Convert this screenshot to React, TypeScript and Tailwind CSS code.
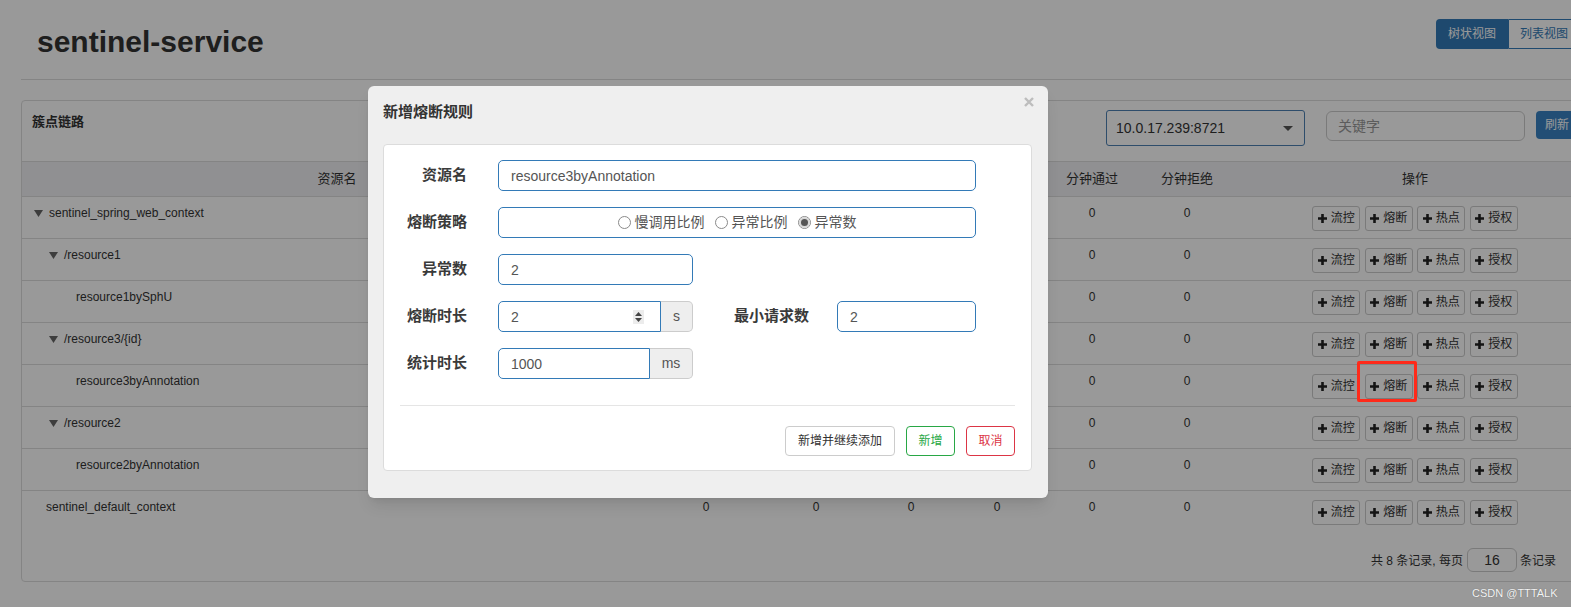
import React from 'react';

interface TreeRow {
  name: string;
  level: number;
  branch: boolean;
}

const ROWS: TreeRow[] = [
  { name: 'sentinel_spring_web_context', level: 0, branch: true },
  { name: '/resource1', level: 1, branch: true },
  { name: 'resource1bySphU', level: 2, branch: false },
  { name: '/resource3/{id}', level: 1, branch: true },
  { name: 'resource3byAnnotation', level: 2, branch: false },
  { name: '/resource2', level: 1, branch: true },
  { name: 'resource2byAnnotation', level: 2, branch: false },
  { name: 'sentinel_default_context', level: 0, branch: false },
];

const INDENT = ['pl-0', 'pl-[15px]', 'pl-[30px]'];
const HEADERS = ['资源名', '通过QPS', '拒绝QPS', '并发数', '平均RT', '分钟通过', '分钟拒绝', '操作'];
const ACTIONS = ['流控', '熔断', '热点', '授权'];
const GRID = 'grid grid-cols-[630px_108px_112px_78px_94px_96px_94px_1fr]';

function Caret() {
  return (
    <svg width="9" height="7" viewBox="0 0 9 7" className="shrink-0">
      <path d="M0 0h9L4.5 7z" fill="#666" />
    </svg>
  );
}

function Plus() {
  return (
    <svg width="9" height="9" viewBox="0 0 9 9" className="shrink-0">
      <path d="M3.2 0h2.6v3.2H9v2.6H5.8V9H3.2V5.8H0V3.2h3.2z" fill="#222" />
    </svg>
  );
}

function Radio({ checked, label }: { checked?: boolean; label: string }) {
  return (
    <span className="inline-flex items-center gap-[4px]">
      <span className="flex h-[13px] w-[13px] items-center justify-center rounded-full border border-[#8a8a8a] bg-white">
        {checked && <span className="h-[7px] w-[7px] rounded-full bg-[#555] ring-2 ring-[#d8d8d8]" />}
      </span>
      <span>{label}</span>
    </span>
  );
}

function Field({ label, children }: { label: string; children: React.ReactNode }) {
  return (
    <div className="mb-[16px] flex h-[31px] items-center">
      <div className="w-[114px] pr-[31px] text-right text-[15px] font-bold text-[#3a3a3a]">{label}</div>
      {children}
    </div>
  );
}

const inputCls = 'h-[31px] rounded-[5px] border border-[#337ab7] bg-white px-[12px] text-[14px] text-[#555] outline-none';

function Modal() {
  return (
    <div className="absolute left-[368px] top-[86px] w-[680px] rounded-[6px] bg-[#efefef] pb-[27px] shadow-lg">
      <div className="h-[58px] pl-[15px] pt-[16px] text-[15px] font-bold leading-[20px] text-[#333]">新增熔断规则</div>
      <svg width="10" height="10" viewBox="0 0 10 10" className="absolute left-[656px] top-[11px]">
        <path d="M1 1l8 8M9 1l-8 8" stroke="#bdbdbd" strokeWidth="2.4" />
      </svg>

      <div className="ml-[15px] w-[649px] rounded-[4px] border border-[#dcdcdc] bg-white pb-[14px] pt-[15px]">
        <Field label="资源名">
          <input readOnly defaultValue="resource3byAnnotation" className={`${inputCls} w-[478px]`} />
        </Field>
        <Field label="熔断策略">
          <div className={`${inputCls} flex w-[478px] items-center justify-center gap-[10px] text-[14px] text-[#444]`}>
            <Radio label="慢调用比例" />
            <Radio label="异常比例" />
            <Radio checked label="异常数" />
          </div>
        </Field>
        <Field label="异常数">
          <input readOnly defaultValue="2" className={`${inputCls} w-[195px]`} />
        </Field>
        <Field label="熔断时长">
          <div className="flex w-[195px]">
            <div className="relative">
              <input readOnly defaultValue="2" className={`${inputCls} w-[163px] rounded-r-none`} />
              <div className="absolute left-[135px] top-[9px] flex h-[14px] w-[11px] flex-col items-center justify-center gap-[2px] bg-[#ececec]">
                <svg width="7" height="4" viewBox="0 0 7 4"><path d="M0 4h7L3.5 0z" fill="#444" /></svg>
                <svg width="7" height="4" viewBox="0 0 7 4"><path d="M0 0h7L3.5 4z" fill="#444" /></svg>
              </div>
            </div>
            <div className="flex h-[31px] flex-1 items-center justify-center rounded-r-[5px] border border-l-0 border-[#ccc] bg-[#eee] text-[14px] text-[#555]">s</div>
          </div>
          <div className="w-[144px] pr-[28px] text-right text-[15px] font-bold text-[#3a3a3a]">最小请求数</div>
          <input readOnly defaultValue="2" className={`${inputCls} w-[139px]`} />
        </Field>
        <Field label="统计时长">
          <div className="flex w-[195px]">
            <input readOnly defaultValue="1000" className={`${inputCls} w-[152px] rounded-r-none`} />
            <div className="flex h-[31px] flex-1 items-center justify-center rounded-r-[5px] border border-l-0 border-[#ccc] bg-[#eee] text-[14px] text-[#555]">ms</div>
          </div>
        </Field>

        <div className="mx-[16px] mt-[26px] border-t border-[#e5e5e5]" />
        <div className="mr-[16px] mt-[20px] flex justify-end gap-[11px] text-[12px]">
          <button className="h-[30px] w-[110px] rounded-[4px] border border-[#ccc] bg-white text-[#333]">新增并继续添加</button>
          <button className="h-[30px] w-[49px] rounded-[4px] border border-[#28a745] bg-white text-[#28a745]">新增</button>
          <button className="h-[30px] w-[49px] rounded-[4px] border border-[#dc3545] bg-white text-[#dc3545]">取消</button>
        </div>
      </div>
    </div>
  );
}

export default function App() {
  return (
    <div className="relative h-[607px] w-[1571px] overflow-hidden bg-white font-['Liberation_Sans','Noto_Sans_CJK_SC',sans-serif] text-[#333]">
      <div className="w-[1618px] px-[21px]">
        {/* page header */}
        <div className="flex h-[80px] items-start justify-between border-b border-[#ddd]">
          <h1 className="mt-[25px] pl-[16px] text-[30px] font-bold leading-[33px] text-[#333]">sentinel-service</h1>
          <div className="mr-[17px] mt-[19px] flex text-[12px]">
            <button className="h-[30px] w-[72px] rounded-l-[4px] bg-[#337ab7] text-white">树状视图</button>
            <button className="h-[30px] w-[72px] rounded-r-[4px] border border-[#337ab7] bg-white text-[#337ab7]">列表视图</button>
          </div>
        </div>

        {/* panel */}
        <div className="mt-[20px] rounded-[4px] border border-[#ddd]">
          <div className="flex h-[60px] items-start pl-[10px] pr-[18px] pt-[9px]">
            <div className="mt-[2px] text-[13px] font-bold leading-[19px]">簇点链路</div>
            <div className="flex-1" />
            <div className="flex h-[36px] w-[199px] items-center justify-between rounded-[3px] border border-[#4d80b3] pl-[9px] pr-[11px] text-[14px]">
              <span>10.0.17.239:8721</span>
              <svg width="10" height="5" viewBox="0 0 10 5"><path d="M0 0h10L5 5z" fill="#555" /></svg>
            </div>
            <input
              readOnly
              placeholder="关键字"
              className="ml-[21px] mt-[1px] h-[30px] w-[199px] rounded-[6px] border border-[#ccc] px-[11px] text-[14px] placeholder:text-[#999] outline-none"
            />
            <button className="ml-[11px] mt-[1px] h-[28px] w-[42px] rounded-[4px] bg-[#3a83c4] text-[12px] text-white">刷新</button>
          </div>

          <div className={`${GRID} h-[36px] items-center border-y border-[#ddd] bg-[#f1f1f3] text-center text-[13px]`}>
            {HEADERS.map((h) => (
              <div key={h}>{h}</div>
            ))}
          </div>

          {ROWS.map((r, i) => (
            <div
              key={r.name}
              className={`${GRID} h-[42px] items-start pt-[8px] text-[12px] leading-[17px] ${i < ROWS.length - 1 ? 'border-b border-[#ddd]' : ''}`}
            >
              <div className="flex items-center pl-[12px]">
                <div className={`flex items-center ${INDENT[r.level]}`}>
                  {r.branch ? (
                    <span className="mr-[6px] flex"><Caret /></span>
                  ) : (
                    <span className="w-[12px]" />
                  )}
                  <span>{r.name}</span>
                </div>
              </div>
              {[0, 1, 2, 3, 4, 5].map((c) => (
                <div key={c} className="text-center">0</div>
              ))}
              <div className="flex justify-center gap-[4.5px] pt-px">
                {ACTIONS.map((a) => (
                  <button
                    key={a}
                    className="flex h-[25px] w-[48px] items-center justify-center gap-[4px] rounded-[3px] border border-[#ccc] bg-white text-[12px] text-[#333]"
                  >
                    <Plus />
                    {a}
                  </button>
                ))}
              </div>
            </div>
          ))}

          <div className="flex h-[48px] items-start justify-end pr-[40px] pt-[15px] text-[12px]">
            <span className="mt-[4px]">共 8 条记录, 每页</span>
            <div className="ml-[4px] flex h-[24px] w-[50px] items-center justify-center rounded-[6px] border border-[#ccc] text-[14px]">16</div>
            <span className="ml-[3px] mt-[4px]">条记录</span>
          </div>
        </div>
      </div>

      {/* modal backdrop */}
      <div className="absolute inset-0 bg-black/40" />

      <Modal />

      {/* screenshot annotation */}
      <div className="absolute left-[1357px] top-[361px] h-[41px] w-[60px] rounded-[2px] border-[3px] border-[#ff2a1a]" />
      <div className="absolute left-[1472px] top-[585px] text-[11px] text-[#f4f4f4] [text-shadow:0_0_1px_#666]">CSDN @TTTALK</div>
    </div>
  );
}
